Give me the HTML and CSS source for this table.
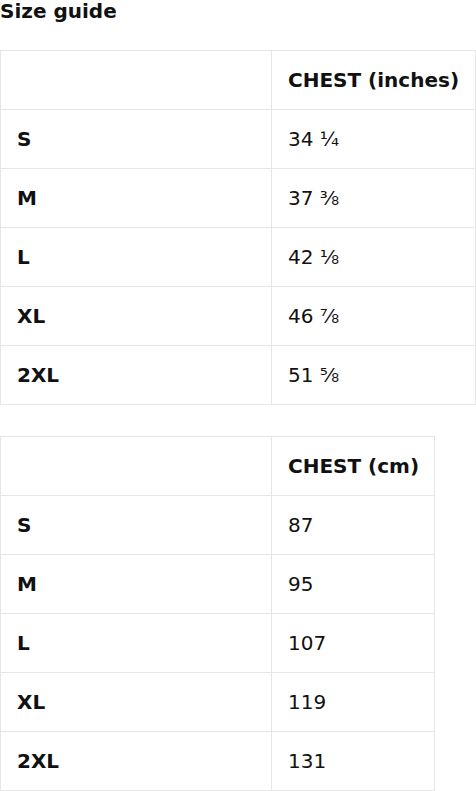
FILE: index.html
```html
<!DOCTYPE html>
<html>
<head>
<meta charset="utf-8">
<link rel="stylesheet" href="styles.css">
</head>
<body>
<div class="title">Size guide</div>
<table class="size-table wide">
  <tr><th class="label"></th><th>CHEST (inches)</th></tr>
  <tr><th class="label">S</th><td>34 ¼</td></tr>
  <tr><th class="label">M</th><td>37 ⅜</td></tr>
  <tr><th class="label">L</th><td>42 ⅛</td></tr>
  <tr><th class="label">XL</th><td>46 ⅞</td></tr>
  <tr><th class="label">2XL</th><td>51 ⅝</td></tr>
</table>
<table class="size-table narrow">
  <tr><th class="label"></th><th>CHEST (cm)</th></tr>
  <tr><th class="label">S</th><td>87</td></tr>
  <tr><th class="label">M</th><td>95</td></tr>
  <tr><th class="label">L</th><td>107</td></tr>
  <tr><th class="label">XL</th><td>119</td></tr>
  <tr><th class="label">2XL</th><td>131</td></tr>
</table>
</body>
</html>
```
FILE: styles.css
```css
html, body {
  margin: 0;
  padding: 0;
  background: #fff;
}
body {
  font-family: "DejaVu Sans", sans-serif;
  color: #111;
  font-size: 20px;
}
.title {
  font-weight: bold;
  line-height: 22px;
  margin-bottom: 28px;
}
.size-table {
  border-collapse: collapse;
  table-layout: fixed;
  margin-bottom: 31px;
}
.size-table.wide { width: 476px; }
.size-table.narrow { width: 435px; }
.size-table th,
.size-table td {
  border: 1px solid #e6e6e6;
  padding: 16px;
  line-height: 26px;
  height: 26px;
  text-align: left;
  vertical-align: middle;
  white-space: nowrap;
}
.size-table th { font-weight: bold; }
.size-table td { font-weight: normal; }
.size-table .label { width: 271px; box-sizing: border-box; }
```
